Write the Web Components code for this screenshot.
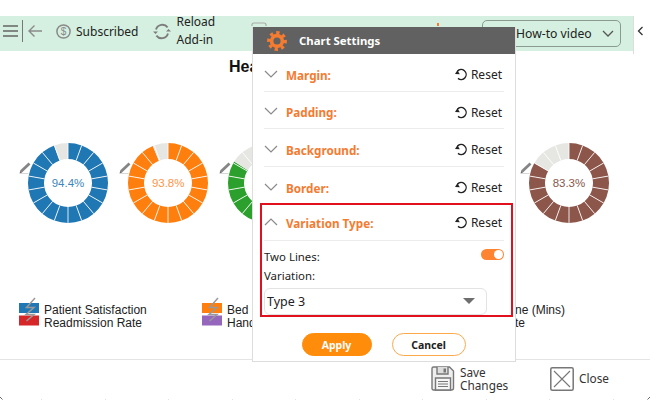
<!DOCTYPE html>
<html>
<head>
<meta charset="utf-8">
<style>
	html, body { margin: 0; padding: 0; background: #fff; }
	body { width: 650px; height: 416px; overflow: hidden; font-family: "Noto Sans", "Open Sans", sans-serif; color: #222; }
</style>
</head>
<body>
<kpi-app></kpi-app>

<script>
const ICONS = {
	menu: `<svg width="15" height="12" viewBox="0 0 15 12"><path d="M0 1h15M0 6h15M0 11h15" stroke="#666" stroke-width="1.4" fill="none"/></svg>`,
	back: `<svg width="14" height="12" viewBox="0 0 14 12"><path d="M14 6H1M6.5 .5 1 6l5.5 5.5" stroke="#8a8a8a" stroke-width="1.4" fill="none"/></svg>`,
	dollar: `<svg width="15" height="15" viewBox="0 0 15 15"><circle cx="7.5" cy="7.5" r="6.6" stroke="#8a8a8a" stroke-width="1.5" fill="none"/><text x="7.5" y="11" font-size="10" font-family="Liberation Sans" fill="#8a8a8a" text-anchor="middle">$</text></svg>`,
	reload: `<svg width="20" height="19" viewBox="0 0 20 19" fill="none" stroke="#7d7d7d" stroke-width="1.9"><path d="M4 7.5A6.6 6.6 0 0 1 15.6 5.4"/><path d="M16 11.5A6.6 6.6 0 0 1 4.4 13.6"/><path d="M1 9.5h5L3.5 12zM14 9.5h5L16.500 7z" fill="#7d7d7d" stroke="none"/></svg>`,
	gear: `<svg width="20" height="20" viewBox="0 0 20 20" fill="none" stroke="#f47b30"><circle cx="10" cy="10" r="5.4" stroke-width="3.6"/><circle cx="10" cy="10" r="8.200" stroke-width="3.4" stroke-dasharray="3.220 3.220" transform="rotate(-7 10 10)"/></svg>`,
	reset: `<svg width="13" height="13" viewBox="0 0 13 13" fill="none"><path d="M2.400 3.200A5 5 0 1 1 3 10.400" stroke="#222" stroke-width="1.400"/><path d="M0 6 4.800 6.200 2.400 2.200z" fill="#222"/></svg>`,
	save: `<svg width="24" height="25" viewBox="0 0 24 25" fill="#eee" stroke="#777" stroke-width="1.400"><path d="M2.500 1h16l4 4v17a2 2 0 0 1-2 2h-18a1.500 1.500 0 0 1-1.500-1.500V2.500A1.500 1.500 0 0 1 2.500 1z"/><path d="M6 1v7h11V1" fill="#ddd"/><path d="M4.500 12h15v12h-15z" fill="#f6f6f6"/><path d="M7 15.500h10M7 18h10M7 20.500h10" stroke-width="1"/><path d="M12.500 2.500h2.500v4h-2.500z" fill="#777" stroke="none"/></svg>`,
	close: `<svg width="24" height="24" viewBox="0 0 24 24" fill="none" stroke="#777"><rect x=".8" y=".8" width="22.400" height="22.400" rx="1.500" stroke-width="1.500"/><path d="M4 4l16 16M20 4 4 20" stroke-width="1.100"/></svg>`,
	chevDown: `<svg width="14" height="8" viewBox="0 0 14 8"><path d="M1 1l6 6 6-6" stroke="#8a8a8a" stroke-width="1.200" fill="none"/></svg>`,
	chevUp: `<svg width="14" height="8" viewBox="0 0 14 8"><path d="M1 7l6-6 6 6" stroke="#8a8a8a" stroke-width="1.200" fill="none"/></svg>`,
	pencil: `<svg width="13" height="13" viewBox="0 0 13 13"><path d="M.5 12.500h9" stroke="#d8d8d8" stroke-width="1"/><path d="M2 10.500 10.500 2.500" stroke="#858585" stroke-width="2.800"/><path d="M.6 12.300 1.300 9.800l1.900 1.800z" fill="#666"/></svg>`
};

class KpiDonut extends HTMLElement
{
	constructor() {
		super();
		this.attachShadow({mode: 'open'});
	}

	connectedCallback() {
		const value = parseFloat(this.getAttribute('value'));
		const color = this.getAttribute('color');
		const ink = this.getAttribute('ink') || color;
		const shown = this.hasAttribute('blank') ? '' : value + '%';
		this.shadowRoot.innerHTML = `
			<style>
				:host { display: block; width: 100px; height: 84px; }
				#wrap { display: grid; width: 100px; height: 84px; }
				#wrap > * { grid-area: 1 / 1; }
				svg { display: block; }
				#label {
					place-self: center;
					font: 11.500px "Liberation Sans", Arial, sans-serif;
					color: ${ink};
				}
			</style>
			<div id="wrap">
				<svg width="100" height="84" viewBox="-50 -42 100 84">${this._slices(value, color)}</svg>
				<span id="label">${shown}</span>
			</div>`;
	}

	_arc(a0, a1, fill) {
		const p = (r, a) => {
			const t = (a - 90) * Math.PI / 180;
			return `${(r * Math.cos(t)).toFixed(2)} ${(r * Math.sin(t)).toFixed(2)}`;
		};
		return `<path fill="${fill}" d="M${p(40, a0)}A40 40 0 0 1 ${p(40, a1)}L${p(24, a1)}A24 24 0 0 0 ${p(24, a0)}Z"/>`;
	}

	_slices(value, color) {
		const end = value * 3.6;
		const step = 20;
		let out = '';
		let lines = '';
		for (let i = 0; i < 18; i++) {
			const a0 = i * step;
			const a1 = a0 + step;
			if (end >= a1) out += this._arc(a0, a1, color);
			else if (end <= a0) out += this._arc(a0, a1, '#e6e6e2');
			else out += this._arc(a0, end, color) + this._arc(end, a1, '#e6e6e2');
			const t = (a0 - 90) * Math.PI / 180;
			lines += `<path d="M${24 * Math.cos(t)} ${24 * Math.sin(t)}L${40 * Math.cos(t)} ${40 * Math.sin(t)}" stroke="#fff" stroke-opacity=".85" stroke-width="1"/>`;
		}
		const pencil = `<g transform="translate(-49 -22)">${ICONS.pencil.replace(/<\/?svg[^>]*>/g, '')}</g>`;
		return out + lines + pencil;
	}
}
customElements.define('kpi-donut', KpiDonut);

class LegendItem extends HTMLElement
{
	constructor() {
		super();
		let c1 = this.getAttribute('c1'), c2 = this.getAttribute('c2');
		this.attachShadow({mode: 'open'}).innerHTML = `
			<style>
				:host { display: flex; align-items: flex-start; gap: 5px; font: 12px/13px "Liberation Sans", Arial, sans-serif; color: #222; }
				svg { display: block; flex: none; margin-top: -8px; }
				#text { display: flex; flex-direction: column; white-space: nowrap; }
			</style>
			<svg width="20" height="30" viewBox="0 0 20 30">
				<rect x="0" y="7" width="20" height="10" fill="${c1}"/>
				<rect x="0" y="19.500" width="20" height="10" fill="${c2}"/>
				<path d="M16 2 7.500 11.500h7.500L7 18.500h8L7.500 25" stroke="#999" stroke-width="1.500" fill="none"/>
			</svg>
			<div id="text"><slot></slot></div>`;
	}
}
customElements.define('legend-item', LegendItem);

class FooterAction extends HTMLElement
{
	constructor() {
		super();
		this.attachShadow({mode: 'open'}).innerHTML = `
			<style>
				:host { display: flex; align-items: center; gap: 5px; font-size: 11.800px; line-height: 13px; color: #333; }
				#text { display: flex; flex-direction: column; }
				svg { display: block; }
			</style>
			${ICONS[this.getAttribute('icon')]}
			<div id="text"><slot></slot></div>`;
	}
}
customElements.define('footer-action', FooterAction);

class AppToolbar extends HTMLElement
{
	constructor() {
		super();
		this.attachShadow({mode: 'open'}).innerHTML = `
			<style>
				:host {
					display: flex; align-items: center; height: 35px; background: #d5f0e0;
					font-size: 12px; color: #222; padding: 0 0 5px 3px; box-sizing: border-box;
				}
				svg { display: block; flex: none; }
				#sep { width: 1px; height: 22px; background: #777; margin: 0 5px 0 4px; }
				#sub { margin: 0 14px 0 5px; }
				#reload { display: flex; flex-direction: column; line-height: 18px; margin-left: 4px; }
				#peek { margin: -14px 0 0 36px; }
				#tick { width: 2px; height: 3px; background: #f47b30; margin: -14px 0 0 170px; flex: none; }
				#video {
					display: flex; align-items: center; box-sizing: border-box;
					width: 139px; height: 27px; margin: 5px 12px 0 auto; padding: 0 6px 0 7px;
					border: 1px solid #8a9a90; border-radius: 5px; font-size: 12.200px;
				}
				#yt { width: 19px; height: 14px; background: #e4262c; border-radius: 3px; margin-right: 7px; flex: none; }
				#caret { margin-left: auto; }
				#tab {
					align-self: flex-start; width: 17px; height: 38px; background: #fff; flex: none;
					border-left: 1px solid #ddd; box-sizing: border-box; padding: 10px 0 0 3px;
				}
			</style>
			${ICONS.menu}
			<div id="sep"></div>
			${ICONS.back}
			<div style="width:14px;flex:none"></div>
			${ICONS.dollar}
			<span id="sub">Subscribed</span>
			${ICONS.reload}
			<div id="reload"><span>Reload</span><span>Add-in</span></div>
			<svg id="peek" width="16" height="4" viewBox="0 0 16 4"><path d="M1 4V2.500Q1 1 3 1h10q2 0 2 1.500V4" stroke="#aaa" stroke-width="1.200" fill="none"/></svg>
			<div id="tick"></div>
			<div id="video"><div id="yt"></div><span>How-to video</span><svg id="caret" width="12" height="7" viewBox="0 0 12 7"><path d="M1 1l5 5 5-5" stroke="#555" stroke-width="1.300" fill="none"/></svg></div>
			<div id="tab"><svg width="7" height="10" viewBox="0 0 7 10"><path d="M5.500 1 1.500 5l4 4" stroke="#333" stroke-width="1.300" fill="none"/></svg></div>`;
	}
}
customElements.define('app-toolbar', AppToolbar);

class SettingsRow extends HTMLElement
{
	constructor() {
		super();
		const open = this.hasAttribute('open');
		this.attachShadow({mode: 'open'}).innerHTML = `
			<style>
				:host {
					display: flex; align-items: center; box-sizing: border-box; height: 37.500px;
					padding-top: 5px; border-bottom: 1px solid #ececec; font-size: 12px;
				}
				#chev { width: 22px; flex: none; display: flex; padding-bottom: 2px; }
				#title { color: #f47b30; font-weight: 700; flex: 1; font-size: 11.700px; }
				#reset { display: flex; align-items: center; gap: 3px; color: #222; padding-right: 2px; }
				svg { display: block; }
			</style>
			<div id="chev">${open ? ICONS.chevUp : ICONS.chevDown}</div>
			<div id="title"><slot></slot></div>
			<div id="reset">${ICONS.reset}<span>Reset</span></div>`;
	}
}
customElements.define('settings-row', SettingsRow);

class SettingsPanel extends HTMLElement
{
	constructor() {
		super();
		this.attachShadow({mode: 'open'}).innerHTML = `
			<style>
				:host {
					position: absolute; left: 252px; top: 27px; width: 264px; height: 335px;
					box-sizing: border-box; display: flex; flex-direction: column;
					background: #fff; border: 1px solid #ddd; border-top: 0; font-size: 11.400px; color: #222;
				}
				#head {
					display: flex; align-items: center; gap: 12px; height: 27px; padding-left: 14px;
					background: #616161; color: #fff; font-weight: 700; font-size: 11.400px;
				}
				#body { display: flex; flex-direction: column; padding: 0 11px; }
				#boxed {
					display: flex; flex-direction: column; height: 114px; box-sizing: border-box;
					margin: -1px -9px 0 -4px; padding: 0 7px 0 2px; border: 2px solid #e0101e;
				}
				#boxed settings-row { height: 36px; flex: none; padding-top: 0; }
				#two { display: flex; justify-content: space-between; align-items: flex-start; margin-top: 7px; height: 18px; line-height: 17px; }
				#toggle { width: 23px; height: 11px; background: #ff8431; border-radius: 6px; display: flex; justify-content: flex-end; padding: 1px; box-sizing: border-box; margin-top: 1px; }
				#toggle i { width: 9px; height: 9px; background: #fff; border-radius: 50%; display: block; }
				#var { line-height: 17px; height: 17px; margin-top: 1px; }
				#select {
					display: flex; align-items: center; justify-content: space-between; box-sizing: border-box;
					width: 223px; height: 28px; margin-top: 4px; padding: 0 11px 0 2px;
					border: 1px solid #e3e3e3; border-radius: 6px; font-size: 12.500px;
				}
				#select b { width: 0; height: 0; border: 5px solid transparent; border-top: 6px solid #6e6e6e; border-bottom: 0; border-left-width: 6px; border-right-width: 6px; }
				#actions { display: flex; justify-content: center; gap: 20px; margin-top: 16px; padding-right: 1px; }
				button {
					height: 23px; border-radius: 12px; font: 700 10.500px "Noto Sans", sans-serif; padding: 0;
				}
				#apply { width: 70px; background: #ff8c0a; border: 1px solid #ff8c0a; color: #fff; }
				#cancel { width: 74px; background: #fff; border: 1px solid #fba94a; color: #222; }
			</style>
			<div id="head">${ICONS.gear}<span>Chart Settings</span></div>
			<div id="body">
				<settings-row>Margin:</settings-row>
				<settings-row>Padding:</settings-row>
				<settings-row>Background:</settings-row>
				<settings-row style="border-bottom:0">Border:</settings-row>
				<div id="boxed">
					<settings-row open>Variation Type:</settings-row>
					<div id="two"><span>Two Lines:</span><div id="toggle"><i></i></div></div>
					<div id="var">Variation:</div>
					<div id="select"><span>Type 3</span><b></b></div>
				</div>
			</div>
			<div id="actions"><button id="apply">Apply</button><button id="cancel">Cancel</button></div>`;
	}
}
customElements.define('settings-panel', SettingsPanel);

class KpiApp extends HTMLElement
{
	constructor() {
		super();
		this.attachShadow({mode: 'open'}).innerHTML = `
			<style>
				:host { display: flex; flex-direction: column; position: relative; width: 650px; height: 416px; padding-top: 16px; box-sizing: border-box; overflow: hidden; }
				h1 { margin: 6px 0 0 229px; font: 700 16px/20px "Liberation Sans", Arial, sans-serif; color: #111; height: 20px; flex: none; }
				#donuts { display: grid; grid-template-columns: repeat(6, 100.200px); margin: 64px 0 0 18px; flex: none; }
				#donuts kpi-donut:last-child { grid-column: 6; }
				#legend { display: flex; margin: 79px 0 0 19px; height: 28px; flex: none; }
				#legend legend-item:nth-child(1) { width: 183px; }
				#legend legend-item:nth-child(2) { width: 313px; }
				#legend-rest { font: 12px/13px "Liberation Sans", Arial, sans-serif; color: #222; white-space: nowrap; display: flex; flex-direction: column; }
				#foot {
					display: flex; align-items: center; height: 40px; margin-top: 27px; padding: 0 0 2px 431px;
					border-top: 1px solid #e4e4e4; box-sizing: border-box; flex: none;
				}
				#foot footer-action:first-child { width: 119px; }
				#ticks { display: flex; height: 1px; flex: none; }
				#ticks i { width: 1px; height: 1px; background: #e2e2e2; margin-right: 62.500px; flex: none; }
				#ticks i:nth-last-child(2) { margin-right: 0; }
				#ticks svg { display: block; flex: none; margin-top: -3px; }
				#ticks svg:first-child { margin-right: 38px; }
				#ticks svg:last-child { margin-left: auto; }
			</style>
			<app-toolbar></app-toolbar>
			<h1>Hea</h1>
			<div id="donuts">
				<kpi-donut value="94.4" color="#1f77b4" ink="#3d87bd"></kpi-donut>
				<kpi-donut value="93.8" color="#ff7f0e" ink="#ff9447"></kpi-donut>
				<kpi-donut value="84" color="#2ca02c" blank></kpi-donut>
				<kpi-donut value="83.3" color="#8c564b"></kpi-donut>
			</div>
			<div id="legend">
				<legend-item c1="#1f77b4" c2="#d62728"><span>Patient Satisfaction</span><span>Readmission Rate</span></legend-item>
				<legend-item c1="#ff7f0e" c2="#9467bd"><span>Bed</span><span>Hand</span></legend-item>
				<div id="legend-rest"><span>ne (Mins)</span><span>te</span></div>
			</div>
			<div id="foot">
				<footer-action icon="save"><span>Save</span><span>Changes</span></footer-action>
				<footer-action icon="close"><span>Close</span></footer-action>
			</div>
			<div id="ticks">
				<svg width="3" height="4" viewBox="0 0 3 4"><path d="M0 1 2.500 3.500" stroke="#666" fill="none"/></svg>
				<i></i><i></i><i></i><i></i><i></i><i></i><i></i><i></i><i></i><i></i>
				<svg width="3" height="4" viewBox="0 0 3 4"><path d="M.5 3.500 3 1" stroke="#666" fill="none"/></svg>
			</div>
			<settings-panel></settings-panel>`;
	}
}
customElements.define('kpi-app', KpiApp);
</script>
</body>
</html>
